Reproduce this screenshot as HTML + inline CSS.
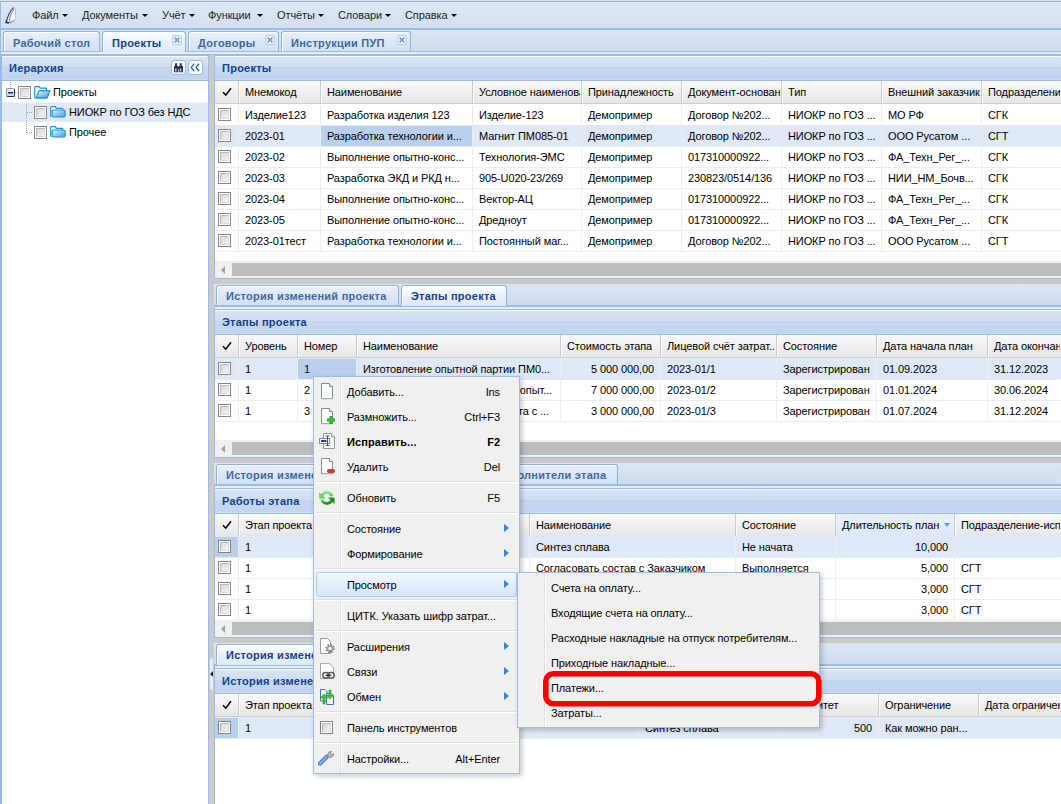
<!DOCTYPE html><html><head><meta charset="utf-8"><style>
*{box-sizing:border-box;margin:0;padding:0}
html,body{width:1061px;height:804px;overflow:hidden;background:#fff;font-family:'Liberation Sans',sans-serif;font-size:11px;color:#000}
.a{position:absolute;overflow:hidden}
.t{position:absolute;white-space:nowrap;line-height:13px;letter-spacing:-0.1px}
.bt{position:absolute;white-space:nowrap;line-height:13px;font-weight:bold;letter-spacing:0.25px}
.ck{position:absolute;width:13px;height:13px;border:1px solid #858585;background:#fff}
.ck:after{content:'';position:absolute;left:1px;top:1px;width:9px;height:9px;background:linear-gradient(135deg,#cfd3d9,#f3f3f3 85%);box-shadow:inset 1px 1px 0 #b9bdc4,inset -1px -1px 0 #dcdcdc}
</style></head><body>
<div class="a" style="left:0px;top:0px;width:1061px;height:1px;background:#e4e2d8"></div>
<div class="a" style="left:0px;top:1px;width:1061px;height:28px;border-top:1px solid #8fb2e2;border-bottom:1px solid #99bbe8;background:linear-gradient(#e6eef8 0,#dde7f3 1px,#d3dfef 26px)"></div>
<svg class="a" style="left:2px;top:4px" width="20" height="22" viewBox="0 0 20 22"><path d="M4.5 18 C5.5 13 8 8 11.5 3.6 L13.6 4.6 L13.4 15.2 C12 17.5 8 18.8 4.5 18.3Z" fill="#fbfbfd" stroke="#b8bcc8" stroke-width="0.8"/><path d="M4.4 18.2 C5.3 12.5 8 7.5 11.5 3.7" stroke="#3346a0" stroke-width="1.1" fill="none"/><path d="M7.4 17 C7.8 12 9.8 8 12.3 5.2" stroke="#4a5cb0" stroke-width="0.8" fill="none"/><path d="M4.2 18.4 C6.5 19 9 18.8 12.5 16" stroke="#6f7fc0" stroke-width="1" fill="none"/><path d="M4.3 16.5 L4.2 18.5 L7 18.8" stroke="#14247a" stroke-width="1.5" fill="none"/></svg>
<div class="t" style="left:32px;top:9px;color:#1e1e1e">Файл</div>
<div class="a" style="left:62px;top:14px;width:0;height:0;border-left:3px solid transparent;border-right:3px solid transparent;border-top:3px solid #000;overflow:visible"></div>
<div class="t" style="left:82px;top:9px;color:#1e1e1e">Документы</div>
<div class="a" style="left:142px;top:14px;width:0;height:0;border-left:3px solid transparent;border-right:3px solid transparent;border-top:3px solid #000;overflow:visible"></div>
<div class="t" style="left:162px;top:9px;color:#1e1e1e">Учёт</div>
<div class="a" style="left:189px;top:14px;width:0;height:0;border-left:3px solid transparent;border-right:3px solid transparent;border-top:3px solid #000;overflow:visible"></div>
<div class="t" style="left:208px;top:9px;color:#1e1e1e">Функции</div>
<div class="a" style="left:257px;top:14px;width:0;height:0;border-left:3px solid transparent;border-right:3px solid transparent;border-top:3px solid #000;overflow:visible"></div>
<div class="t" style="left:277px;top:9px;color:#1e1e1e">Отчёты</div>
<div class="a" style="left:318px;top:14px;width:0;height:0;border-left:3px solid transparent;border-right:3px solid transparent;border-top:3px solid #000;overflow:visible"></div>
<div class="t" style="left:338px;top:9px;color:#1e1e1e">Словари</div>
<div class="a" style="left:385px;top:14px;width:0;height:0;border-left:3px solid transparent;border-right:3px solid transparent;border-top:3px solid #000;overflow:visible"></div>
<div class="t" style="left:405px;top:9px;color:#1e1e1e">Справка</div>
<div class="a" style="left:451px;top:14px;width:0;height:0;border-left:3px solid transparent;border-right:3px solid transparent;border-top:3px solid #000;overflow:visible"></div>
<div class="a" style="left:0px;top:1px;width:1px;height:803px;background:#99bbe8"></div>
<div class="a" style="left:1px;top:29px;width:1060px;height:22px;border-top:1px solid #99bbe8;background:linear-gradient(#dbe6f4,#cfdcee)"></div>
<div class="a" style="left:1px;top:51px;width:1060px;height:1px;background:#99bbe8"></div>
<div class="a" style="left:1px;top:52px;width:1060px;height:2px;background:linear-gradient(#e8ecfb,#e2f2f6)"></div>
<div class="a" style="left:1px;top:54px;width:1060px;height:2px;background:#99bbe8"></div>
<div class="a" style="left:3px;top:31px;width:97px;height:20px;border:1px solid #8db2e3;border-bottom:none;border-radius:3px 3px 0 0;background:linear-gradient(#e9f0fa,#dae6f6 60%,#d3e1f3);box-shadow:inset 1px 1px 0 #fff"></div>
<div class="bt" style="left:13px;top:37px;color:#3f68a0">Рабочий стол</div>
<div class="a" style="left:102px;top:31px;width:84px;height:21px;border:1px solid #8db2e3;border-bottom:none;border-radius:3px 3px 0 0;background:linear-gradient(#fefeff,#e6eef9 60%,#dfe9f7);box-shadow:inset 1px 1px 0 #fff"></div>
<div class="bt" style="left:112px;top:37px;color:#15428b">Проекты</div>
<div class="a" style="left:172px;top:35px;width:10px;height:10px;border:1px solid #b9cce8;border-radius:2px;background:#eef3fa"><svg style="position:absolute;left:1px;top:1px" width="6" height="6" viewBox="0 0 6 6"><path d="M0.5 0.5L5.5 5.5M5.5 0.5L0.5 5.5" stroke="#7f9cc7" stroke-width="1.6"/></svg></div>
<div class="a" style="left:188px;top:31px;width:91px;height:20px;border:1px solid #8db2e3;border-bottom:none;border-radius:3px 3px 0 0;background:linear-gradient(#e9f0fa,#dae6f6 60%,#d3e1f3);box-shadow:inset 1px 1px 0 #fff"></div>
<div class="bt" style="left:198px;top:37px;color:#3f68a0">Договоры</div>
<div class="a" style="left:265px;top:35px;width:10px;height:10px;border:1px solid #b9cce8;border-radius:2px;background:#eef3fa"><svg style="position:absolute;left:1px;top:1px" width="6" height="6" viewBox="0 0 6 6"><path d="M0.5 0.5L5.5 5.5M5.5 0.5L0.5 5.5" stroke="#7f9cc7" stroke-width="1.6"/></svg></div>
<div class="a" style="left:281px;top:31px;width:130px;height:20px;border:1px solid #8db2e3;border-bottom:none;border-radius:3px 3px 0 0;background:linear-gradient(#e9f0fa,#dae6f6 60%,#d3e1f3);box-shadow:inset 1px 1px 0 #fff"></div>
<div class="bt" style="left:291px;top:37px;color:#3f68a0">Инструкции ПУП</div>
<div class="a" style="left:397px;top:35px;width:10px;height:10px;border:1px solid #b9cce8;border-radius:2px;background:#eef3fa"><svg style="position:absolute;left:1px;top:1px" width="6" height="6" viewBox="0 0 6 6"><path d="M0.5 0.5L5.5 5.5M5.5 0.5L0.5 5.5" stroke="#7f9cc7" stroke-width="1.6"/></svg></div>
<div class="a" style="left:1px;top:55px;width:208px;height:749px;border:1px solid #99bbe8;border-bottom:none;background:#fff"></div>
<div class="a" style="left:2px;top:56px;width:206px;height:25px;background:linear-gradient(#f5f8f9 0,#f5f8f9 1px,#dde6ef 1px,#dde6ef 2px,#d7e4f5 2px,#cfddf1 11px,#c3d3ea 11px,#c3d3ea 12px,#c6d8f1 12px,#c2d4ee 23px,#c8dcf4 23px,#c8dcf4 24px,#99bbe8 24px)"></div>
<div class="bt" style="left:9px;top:62px;color:#15428b">Иерархия</div>
<div class="a" style="left:171px;top:60px;width:15px;height:15px;border:1px solid #98bbea;border-radius:3px;background:linear-gradient(#ffffff,#f3f7fd)"><svg style="position:absolute;left:0;top:0" width="13" height="13" viewBox="0 0 13 13"><path d="M3 2.2h2.2v3H3z M7.6 2.2h2.2v3H7.6z" fill="#2e3a66"/><path d="M2 5h4.2v6.2H2z M6.8 5h4.2v6.2H6.8z" fill="#27325c"/><path d="M5.8 6h1.4v2H5.8z" fill="#27325c"/><path d="M3 7.6h1.6v2.8H3z M7.8 7.6h1.6v2.8H7.8z" fill="#a9c2f0"/></svg></div>
<div class="a" style="left:188px;top:60px;width:15px;height:15px;border:1px solid #98bbea;border-radius:3px;background:linear-gradient(#ffffff,#f3f7fd)"><svg style="position:absolute;left:0;top:0" width="13" height="13" viewBox="0 0 13 13"><path d="M5.2 2.6 L2.3 6.4 L5.2 10.2 M10 2.6 L7.1 6.4 L10 10.2" stroke="#2f5c9e" stroke-width="1.3" fill="none"/></svg></div>
<div class="a" style="left:2px;top:102px;width:206px;height:1px;background:repeating-linear-gradient(90deg,#dfe8f6 0 1px,#fff 1px 2px)"></div>
<div class="a" style="left:2px;top:103px;width:206px;height:19px;background:#e1e9f6"></div>
<div class="a" style="left:10px;top:82px;width:1px;height:5px;background:repeating-linear-gradient(#a0a0a0 0 1px,transparent 1px 2px)"></div>
<div class="a" style="left:26px;top:104px;width:1px;height:29px;background:repeating-linear-gradient(#a0a0a0 0 1px,transparent 1px 2px)"></div>
<div class="a" style="left:27px;top:112px;width:6px;height:1px;background:repeating-linear-gradient(90deg,#a0a0a0 0 1px,transparent 1px 2px)"></div>
<div class="a" style="left:27px;top:132px;width:6px;height:1px;background:repeating-linear-gradient(90deg,#a0a0a0 0 1px,transparent 1px 2px)"></div>
<div class="a" style="left:15px;top:92px;width:3px;height:1px;background:repeating-linear-gradient(90deg,#a0a0a0 0 1px,transparent 1px 2px)"></div>
<div class="a" style="left:6px;top:88px;width:9px;height:9px;border:1px solid #8796b6;border-right-color:#1f2f5a;border-bottom-color:#1f2f5a;border-radius:2px;background:linear-gradient(#fbfcff,#c9d6ea)"><div style="position:absolute;left:1px;top:3px;width:5px;height:1px;background:#1d2f66;box-shadow:0 0.5px 0 #1d2f66"></div></div>
<div class="ck" style="left:18px;top:86px"></div>
<svg class="a" style="left:34px;top:86px" width="17" height="13" viewBox="0 0 17 13"><defs><linearGradient id="fg3486" x1="0" y1="0" x2="1" y2="1"><stop offset="0" stop-color="#e3f3fd"/><stop offset="1" stop-color="#3a9ef2"/></linearGradient></defs><path d="M0.7 11.8 V1.3 Q0.7 0.7 1.3 0.7 H5 L6 2.2 H11.8 Q12.6 2.2 12.6 3 V4.6" fill="#fbfdff" stroke="#1a96d4" stroke-width="1.2"/><path d="M2.3 11.8 L5 4.6 H16 L13.2 11.8 Z" fill="url(#fg3486)" stroke="#1a96d4" stroke-width="1.2" stroke-linejoin="round"/><path d="M0.7 11.8 H13" stroke="#1a96d4" stroke-width="1.2"/></svg>
<div class="t" style="left:53px;top:86px;">Проекты</div>
<div class="ck" style="left:34px;top:106px"></div>
<svg class="a" style="left:50px;top:106px" width="16" height="13" viewBox="0 0 16 13"><defs><linearGradient id="fg50106" x1="0" y1="0" x2="1" y2="1"><stop offset="0" stop-color="#e3f3fd"/><stop offset="1" stop-color="#3a9ef2"/></linearGradient></defs><path d="M0.7 11 V1.3 Q0.7 0.7 1.3 0.7 H5.2 L6.4 2.4 H12 Q12.8 2.4 12.8 3.2 V4" fill="#fbfdff" stroke="#1a96d4" stroke-width="1.2"/><rect x="2.2" y="4" width="12.9" height="7" rx="1.2" fill="url(#fg50106)" stroke="#1a96d4" stroke-width="1.2"/></svg>
<div class="t" style="left:69px;top:106px;">НИОКР по ГОЗ без НДС</div>
<div class="ck" style="left:34px;top:126px"></div>
<svg class="a" style="left:50px;top:126px" width="16" height="13" viewBox="0 0 16 13"><defs><linearGradient id="fg50126" x1="0" y1="0" x2="1" y2="1"><stop offset="0" stop-color="#e3f3fd"/><stop offset="1" stop-color="#3a9ef2"/></linearGradient></defs><path d="M0.7 11 V1.3 Q0.7 0.7 1.3 0.7 H5.2 L6.4 2.4 H12 Q12.8 2.4 12.8 3.2 V4" fill="#fbfdff" stroke="#1a96d4" stroke-width="1.2"/><rect x="2.2" y="4" width="12.9" height="7" rx="1.2" fill="url(#fg50126)" stroke="#1a96d4" stroke-width="1.2"/></svg>
<div class="t" style="left:69px;top:126px;">Прочее</div>
<div class="a" style="left:209px;top:55px;width:5px;height:749px;background:#cacaca"></div>
<div class="a" style="left:214px;top:55px;width:847px;height:749px;background:#cacaca"></div>
<div class="a" style="left:214px;top:55px;width:847px;height:224px;border:1px solid #99bbe8;border-right:none;background:#fff"></div>
<div class="a" style="left:215px;top:56px;width:846px;height:25px;background:linear-gradient(#f5f8f9 0,#f5f8f9 1px,#dde6ef 1px,#dde6ef 2px,#d7e4f5 2px,#cfddf1 11px,#c3d3ea 11px,#c3d3ea 12px,#c6d8f1 12px,#c2d4ee 23px,#c8dcf4 23px,#c8dcf4 24px,#99bbe8 24px)"></div>
<div class="bt" style="left:222px;top:62px;color:#15428b">Проекты</div>
<div class="a" style="left:215px;top:81px;width:846px;height:23px;background:linear-gradient(#f9f9f9,#e6e6e6);border-bottom:1px solid #d0d0d0"></div>
<div class="a" style="left:238px;top:81px;width:1px;height:22px;background:#cbcbcb"></div>
<div class="a" style="left:239px;top:81px;width:1px;height:22px;background:#fafafa"></div>
<div class="a" style="left:320px;top:81px;width:1px;height:22px;background:#cbcbcb"></div>
<div class="a" style="left:321px;top:81px;width:1px;height:22px;background:#fafafa"></div>
<div class="a" style="left:472px;top:81px;width:1px;height:22px;background:#cbcbcb"></div>
<div class="a" style="left:473px;top:81px;width:1px;height:22px;background:#fafafa"></div>
<div class="a" style="left:581px;top:81px;width:1px;height:22px;background:#cbcbcb"></div>
<div class="a" style="left:582px;top:81px;width:1px;height:22px;background:#fafafa"></div>
<div class="a" style="left:681px;top:81px;width:1px;height:22px;background:#cbcbcb"></div>
<div class="a" style="left:682px;top:81px;width:1px;height:22px;background:#fafafa"></div>
<div class="a" style="left:781px;top:81px;width:1px;height:22px;background:#cbcbcb"></div>
<div class="a" style="left:782px;top:81px;width:1px;height:22px;background:#fafafa"></div>
<div class="a" style="left:881px;top:81px;width:1px;height:22px;background:#cbcbcb"></div>
<div class="a" style="left:882px;top:81px;width:1px;height:22px;background:#fafafa"></div>
<div class="a" style="left:981px;top:81px;width:1px;height:22px;background:#cbcbcb"></div>
<div class="a" style="left:982px;top:81px;width:1px;height:22px;background:#fafafa"></div>
<svg class="a" style="left:222px;top:87px" width="10" height="10" viewBox="0 0 10 10"><path d="M1 5.2 L3.8 8.2 L9 1.2" stroke="#000" stroke-width="1.5" fill="none"/></svg>
<div class="a" style="left:239px;top:81px;width:80px;height:22px"><div class="t" style="left:6px;top:5px">Мнемокод</div></div>
<div class="a" style="left:321px;top:81px;width:150px;height:22px"><div class="t" style="left:6px;top:5px">Наименование</div></div>
<div class="a" style="left:473px;top:81px;width:107px;height:22px"><div class="t" style="left:6px;top:5px">Условное наименование</div></div>
<div class="a" style="left:582px;top:81px;width:98px;height:22px"><div class="t" style="left:6px;top:5px">Принадлежность</div></div>
<div class="a" style="left:682px;top:81px;width:98px;height:22px"><div class="t" style="left:6px;top:5px">Документ-основание</div></div>
<div class="a" style="left:782px;top:81px;width:98px;height:22px"><div class="t" style="left:6px;top:5px">Тип</div></div>
<div class="a" style="left:882px;top:81px;width:98px;height:22px"><div class="t" style="left:6px;top:5px">Внешний заказчик</div></div>
<div class="a" style="left:982px;top:81px;width:78px;height:22px"><div class="t" style="left:6px;top:5px">Подразделение</div></div>
<div class="a" style="left:215px;top:125px;width:846px;height:1px;background:#ededed"></div>
<div class="a" style="left:238px;top:105px;width:1px;height:20px;background:#ededed"></div>
<div class="a" style="left:320px;top:105px;width:1px;height:20px;background:#ededed"></div>
<div class="a" style="left:472px;top:105px;width:1px;height:20px;background:#ededed"></div>
<div class="a" style="left:581px;top:105px;width:1px;height:20px;background:#ededed"></div>
<div class="a" style="left:681px;top:105px;width:1px;height:20px;background:#ededed"></div>
<div class="a" style="left:781px;top:105px;width:1px;height:20px;background:#ededed"></div>
<div class="a" style="left:881px;top:105px;width:1px;height:20px;background:#ededed"></div>
<div class="a" style="left:981px;top:105px;width:1px;height:20px;background:#ededed"></div>
<div class="ck" style="left:218px;top:108px"></div>
<div class="a" style="left:239px;top:105px;width:81px;height:20px"><div class="t" style="left:6px;top:4px">Изделие123</div></div>
<div class="a" style="left:321px;top:105px;width:151px;height:20px"><div class="t" style="left:6px;top:4px">Разработка изделия 123</div></div>
<div class="a" style="left:473px;top:105px;width:108px;height:20px"><div class="t" style="left:6px;top:4px">Изделие-123</div></div>
<div class="a" style="left:582px;top:105px;width:99px;height:20px"><div class="t" style="left:6px;top:4px">Демопример</div></div>
<div class="a" style="left:682px;top:105px;width:99px;height:20px"><div class="t" style="left:6px;top:4px">Договор №202...</div></div>
<div class="a" style="left:782px;top:105px;width:99px;height:20px"><div class="t" style="left:6px;top:4px">НИОКР по ГОЗ ...</div></div>
<div class="a" style="left:882px;top:105px;width:99px;height:20px"><div class="t" style="left:6px;top:4px">МО РФ</div></div>
<div class="a" style="left:982px;top:105px;width:79px;height:20px"><div class="t" style="left:6px;top:4px">СГК</div></div>
<div class="a" style="left:215px;top:125px;width:846px;height:21px;background:#dfe8f6"></div>
<div class="a" style="left:321px;top:126px;width:151px;height:20px;background:#b9cfee"></div>
<div class="a" style="left:215px;top:146px;width:846px;height:1px;background:repeating-linear-gradient(90deg,#d5e0f0 0 1px,#f4f7fb 1px 2px)"></div>
<div class="a" style="left:238px;top:126px;width:1px;height:20px;background:#ededed"></div>
<div class="a" style="left:320px;top:126px;width:1px;height:20px;background:#ededed"></div>
<div class="a" style="left:472px;top:126px;width:1px;height:20px;background:#ededed"></div>
<div class="a" style="left:581px;top:126px;width:1px;height:20px;background:#ededed"></div>
<div class="a" style="left:681px;top:126px;width:1px;height:20px;background:#ededed"></div>
<div class="a" style="left:781px;top:126px;width:1px;height:20px;background:#ededed"></div>
<div class="a" style="left:881px;top:126px;width:1px;height:20px;background:#ededed"></div>
<div class="a" style="left:981px;top:126px;width:1px;height:20px;background:#ededed"></div>
<div class="ck" style="left:218px;top:129px"></div>
<div class="a" style="left:239px;top:126px;width:81px;height:20px"><div class="t" style="left:6px;top:4px">2023-01</div></div>
<div class="a" style="left:321px;top:126px;width:151px;height:20px"><div class="t" style="left:6px;top:4px">Разработка технологии и...</div></div>
<div class="a" style="left:473px;top:126px;width:108px;height:20px"><div class="t" style="left:6px;top:4px">Магнит ПМ085-01</div></div>
<div class="a" style="left:582px;top:126px;width:99px;height:20px"><div class="t" style="left:6px;top:4px">Демопример</div></div>
<div class="a" style="left:682px;top:126px;width:99px;height:20px"><div class="t" style="left:6px;top:4px">Договор №202...</div></div>
<div class="a" style="left:782px;top:126px;width:99px;height:20px"><div class="t" style="left:6px;top:4px">НИОКР по ГОЗ ...</div></div>
<div class="a" style="left:882px;top:126px;width:99px;height:20px"><div class="t" style="left:6px;top:4px">ООО Русатом ...</div></div>
<div class="a" style="left:982px;top:126px;width:79px;height:20px"><div class="t" style="left:6px;top:4px">СГТ</div></div>
<div class="a" style="left:215px;top:167px;width:846px;height:1px;background:#ededed"></div>
<div class="a" style="left:238px;top:147px;width:1px;height:20px;background:#ededed"></div>
<div class="a" style="left:320px;top:147px;width:1px;height:20px;background:#ededed"></div>
<div class="a" style="left:472px;top:147px;width:1px;height:20px;background:#ededed"></div>
<div class="a" style="left:581px;top:147px;width:1px;height:20px;background:#ededed"></div>
<div class="a" style="left:681px;top:147px;width:1px;height:20px;background:#ededed"></div>
<div class="a" style="left:781px;top:147px;width:1px;height:20px;background:#ededed"></div>
<div class="a" style="left:881px;top:147px;width:1px;height:20px;background:#ededed"></div>
<div class="a" style="left:981px;top:147px;width:1px;height:20px;background:#ededed"></div>
<div class="ck" style="left:218px;top:150px"></div>
<div class="a" style="left:239px;top:147px;width:81px;height:20px"><div class="t" style="left:6px;top:4px">2023-02</div></div>
<div class="a" style="left:321px;top:147px;width:151px;height:20px"><div class="t" style="left:6px;top:4px">Выполнение опытно-конс...</div></div>
<div class="a" style="left:473px;top:147px;width:108px;height:20px"><div class="t" style="left:6px;top:4px">Технология-ЭМС</div></div>
<div class="a" style="left:582px;top:147px;width:99px;height:20px"><div class="t" style="left:6px;top:4px">Демопример</div></div>
<div class="a" style="left:682px;top:147px;width:99px;height:20px"><div class="t" style="left:6px;top:4px">017310000922...</div></div>
<div class="a" style="left:782px;top:147px;width:99px;height:20px"><div class="t" style="left:6px;top:4px">НИОКР по ГОЗ ...</div></div>
<div class="a" style="left:882px;top:147px;width:99px;height:20px"><div class="t" style="left:6px;top:4px">ФА_Техн_Рег_...</div></div>
<div class="a" style="left:982px;top:147px;width:79px;height:20px"><div class="t" style="left:6px;top:4px">СГК</div></div>
<div class="a" style="left:215px;top:188px;width:846px;height:1px;background:#ededed"></div>
<div class="a" style="left:238px;top:168px;width:1px;height:20px;background:#ededed"></div>
<div class="a" style="left:320px;top:168px;width:1px;height:20px;background:#ededed"></div>
<div class="a" style="left:472px;top:168px;width:1px;height:20px;background:#ededed"></div>
<div class="a" style="left:581px;top:168px;width:1px;height:20px;background:#ededed"></div>
<div class="a" style="left:681px;top:168px;width:1px;height:20px;background:#ededed"></div>
<div class="a" style="left:781px;top:168px;width:1px;height:20px;background:#ededed"></div>
<div class="a" style="left:881px;top:168px;width:1px;height:20px;background:#ededed"></div>
<div class="a" style="left:981px;top:168px;width:1px;height:20px;background:#ededed"></div>
<div class="ck" style="left:218px;top:171px"></div>
<div class="a" style="left:239px;top:168px;width:81px;height:20px"><div class="t" style="left:6px;top:4px">2023-03</div></div>
<div class="a" style="left:321px;top:168px;width:151px;height:20px"><div class="t" style="left:6px;top:4px">Разработка ЭКД и РКД н...</div></div>
<div class="a" style="left:473px;top:168px;width:108px;height:20px"><div class="t" style="left:6px;top:4px">905-U020-23/269</div></div>
<div class="a" style="left:582px;top:168px;width:99px;height:20px"><div class="t" style="left:6px;top:4px">Демопример</div></div>
<div class="a" style="left:682px;top:168px;width:99px;height:20px"><div class="t" style="left:6px;top:4px">230823/0514/136</div></div>
<div class="a" style="left:782px;top:168px;width:99px;height:20px"><div class="t" style="left:6px;top:4px">НИОКР по ГОЗ ...</div></div>
<div class="a" style="left:882px;top:168px;width:99px;height:20px"><div class="t" style="left:6px;top:4px">НИИ_НМ_Бочв...</div></div>
<div class="a" style="left:982px;top:168px;width:79px;height:20px"><div class="t" style="left:6px;top:4px">СГК</div></div>
<div class="a" style="left:215px;top:209px;width:846px;height:1px;background:#ededed"></div>
<div class="a" style="left:238px;top:189px;width:1px;height:20px;background:#ededed"></div>
<div class="a" style="left:320px;top:189px;width:1px;height:20px;background:#ededed"></div>
<div class="a" style="left:472px;top:189px;width:1px;height:20px;background:#ededed"></div>
<div class="a" style="left:581px;top:189px;width:1px;height:20px;background:#ededed"></div>
<div class="a" style="left:681px;top:189px;width:1px;height:20px;background:#ededed"></div>
<div class="a" style="left:781px;top:189px;width:1px;height:20px;background:#ededed"></div>
<div class="a" style="left:881px;top:189px;width:1px;height:20px;background:#ededed"></div>
<div class="a" style="left:981px;top:189px;width:1px;height:20px;background:#ededed"></div>
<div class="ck" style="left:218px;top:192px"></div>
<div class="a" style="left:239px;top:189px;width:81px;height:20px"><div class="t" style="left:6px;top:4px">2023-04</div></div>
<div class="a" style="left:321px;top:189px;width:151px;height:20px"><div class="t" style="left:6px;top:4px">Выполнение опытно-конс...</div></div>
<div class="a" style="left:473px;top:189px;width:108px;height:20px"><div class="t" style="left:6px;top:4px">Вектор-АЦ</div></div>
<div class="a" style="left:582px;top:189px;width:99px;height:20px"><div class="t" style="left:6px;top:4px">Демопример</div></div>
<div class="a" style="left:682px;top:189px;width:99px;height:20px"><div class="t" style="left:6px;top:4px">017310000922...</div></div>
<div class="a" style="left:782px;top:189px;width:99px;height:20px"><div class="t" style="left:6px;top:4px">НИОКР по ГОЗ ...</div></div>
<div class="a" style="left:882px;top:189px;width:99px;height:20px"><div class="t" style="left:6px;top:4px">ФА_Техн_Рег_...</div></div>
<div class="a" style="left:982px;top:189px;width:79px;height:20px"><div class="t" style="left:6px;top:4px">СГК</div></div>
<div class="a" style="left:215px;top:230px;width:846px;height:1px;background:#ededed"></div>
<div class="a" style="left:238px;top:210px;width:1px;height:20px;background:#ededed"></div>
<div class="a" style="left:320px;top:210px;width:1px;height:20px;background:#ededed"></div>
<div class="a" style="left:472px;top:210px;width:1px;height:20px;background:#ededed"></div>
<div class="a" style="left:581px;top:210px;width:1px;height:20px;background:#ededed"></div>
<div class="a" style="left:681px;top:210px;width:1px;height:20px;background:#ededed"></div>
<div class="a" style="left:781px;top:210px;width:1px;height:20px;background:#ededed"></div>
<div class="a" style="left:881px;top:210px;width:1px;height:20px;background:#ededed"></div>
<div class="a" style="left:981px;top:210px;width:1px;height:20px;background:#ededed"></div>
<div class="ck" style="left:218px;top:213px"></div>
<div class="a" style="left:239px;top:210px;width:81px;height:20px"><div class="t" style="left:6px;top:4px">2023-05</div></div>
<div class="a" style="left:321px;top:210px;width:151px;height:20px"><div class="t" style="left:6px;top:4px">Выполнение опытно-конс...</div></div>
<div class="a" style="left:473px;top:210px;width:108px;height:20px"><div class="t" style="left:6px;top:4px">Дредноут</div></div>
<div class="a" style="left:582px;top:210px;width:99px;height:20px"><div class="t" style="left:6px;top:4px">Демопример</div></div>
<div class="a" style="left:682px;top:210px;width:99px;height:20px"><div class="t" style="left:6px;top:4px">017310000922...</div></div>
<div class="a" style="left:782px;top:210px;width:99px;height:20px"><div class="t" style="left:6px;top:4px">НИОКР по ГОЗ ...</div></div>
<div class="a" style="left:882px;top:210px;width:99px;height:20px"><div class="t" style="left:6px;top:4px">ФА_Техн_Рег_...</div></div>
<div class="a" style="left:982px;top:210px;width:79px;height:20px"><div class="t" style="left:6px;top:4px">СГК</div></div>
<div class="a" style="left:215px;top:251px;width:846px;height:1px;background:#ededed"></div>
<div class="a" style="left:238px;top:231px;width:1px;height:20px;background:#ededed"></div>
<div class="a" style="left:320px;top:231px;width:1px;height:20px;background:#ededed"></div>
<div class="a" style="left:472px;top:231px;width:1px;height:20px;background:#ededed"></div>
<div class="a" style="left:581px;top:231px;width:1px;height:20px;background:#ededed"></div>
<div class="a" style="left:681px;top:231px;width:1px;height:20px;background:#ededed"></div>
<div class="a" style="left:781px;top:231px;width:1px;height:20px;background:#ededed"></div>
<div class="a" style="left:881px;top:231px;width:1px;height:20px;background:#ededed"></div>
<div class="a" style="left:981px;top:231px;width:1px;height:20px;background:#ededed"></div>
<div class="ck" style="left:218px;top:234px"></div>
<div class="a" style="left:239px;top:231px;width:81px;height:20px"><div class="t" style="left:6px;top:4px">2023-01тест</div></div>
<div class="a" style="left:321px;top:231px;width:151px;height:20px"><div class="t" style="left:6px;top:4px">Разработка технологии и...</div></div>
<div class="a" style="left:473px;top:231px;width:108px;height:20px"><div class="t" style="left:6px;top:4px">Постоянный маг...</div></div>
<div class="a" style="left:582px;top:231px;width:99px;height:20px"><div class="t" style="left:6px;top:4px">Демопример</div></div>
<div class="a" style="left:682px;top:231px;width:99px;height:20px"><div class="t" style="left:6px;top:4px">Договор №202...</div></div>
<div class="a" style="left:782px;top:231px;width:99px;height:20px"><div class="t" style="left:6px;top:4px">НИОКР по ГОЗ ...</div></div>
<div class="a" style="left:882px;top:231px;width:99px;height:20px"><div class="t" style="left:6px;top:4px">ООО Русатом ...</div></div>
<div class="a" style="left:982px;top:231px;width:79px;height:20px"><div class="t" style="left:6px;top:4px">СГТ</div></div>
<div class="a" style="left:215px;top:261px;width:846px;height:17px;background:#f0f0f0"></div>
<div class="a" style="left:221px;top:266px;width:0;height:0;border-top:4px solid transparent;border-bottom:4px solid transparent;border-right:4px solid #a0a0a0;overflow:visible"></div>
<div class="a" style="left:232px;top:263px;width:829px;height:13px;background:#bcbcbc"></div>
<div class="a" style="left:214px;top:284px;width:847px;height:174px;border-left:1px solid #99bbe8;border-bottom:1px solid #99bbe8;background:#fff"></div>
<div class="a" style="left:214px;top:284px;width:847px;height:22px;background:linear-gradient(#dbe6f4,#cfdcee)"></div>
<div class="a" style="left:214px;top:305px;width:847px;height:2px;background:#99bbe8"></div>
<div class="a" style="left:215px;top:307px;width:846px;height:2px;background:linear-gradient(#e8ecfb,#e2f2f6)"></div>
<div class="a" style="left:214px;top:309px;width:847px;height:1px;background:#99bbe8"></div>
<div class="a" style="left:216px;top:285px;width:183px;height:20px;border:1px solid #8db2e3;border-bottom:none;border-radius:3px 3px 0 0;background:linear-gradient(#e9f0fa,#dae6f6 60%,#d3e1f3);box-shadow:inset 1px 1px 0 #fff"></div>
<div class="bt" style="left:226px;top:290px;color:#3f68a0">История изменений проекта</div>
<div class="a" style="left:401px;top:285px;width:106px;height:21px;border:1px solid #8db2e3;border-bottom:none;border-radius:3px 3px 0 0;background:linear-gradient(#fefeff,#e6eef9 60%,#dfe9f7);box-shadow:inset 1px 1px 0 #fff"></div>
<div class="bt" style="left:411px;top:290px;color:#15428b">Этапы проекта</div>
<div class="a" style="left:215px;top:310px;width:846px;height:25px;background:linear-gradient(#f5f8f9 0,#f5f8f9 1px,#dde6ef 1px,#dde6ef 2px,#d7e4f5 2px,#cfddf1 11px,#c3d3ea 11px,#c3d3ea 12px,#c6d8f1 12px,#c2d4ee 23px,#c8dcf4 23px,#c8dcf4 24px,#99bbe8 24px)"></div>
<div class="bt" style="left:222px;top:316px;color:#15428b">Этапы проекта</div>
<div class="a" style="left:215px;top:335px;width:846px;height:23px;background:linear-gradient(#f9f9f9,#e6e6e6);border-bottom:1px solid #d0d0d0"></div>
<div class="a" style="left:238px;top:335px;width:1px;height:22px;background:#cbcbcb"></div>
<div class="a" style="left:239px;top:335px;width:1px;height:22px;background:#fafafa"></div>
<div class="a" style="left:297px;top:335px;width:1px;height:22px;background:#cbcbcb"></div>
<div class="a" style="left:298px;top:335px;width:1px;height:22px;background:#fafafa"></div>
<div class="a" style="left:356px;top:335px;width:1px;height:22px;background:#cbcbcb"></div>
<div class="a" style="left:357px;top:335px;width:1px;height:22px;background:#fafafa"></div>
<div class="a" style="left:560px;top:335px;width:1px;height:22px;background:#cbcbcb"></div>
<div class="a" style="left:561px;top:335px;width:1px;height:22px;background:#fafafa"></div>
<div class="a" style="left:660px;top:335px;width:1px;height:22px;background:#cbcbcb"></div>
<div class="a" style="left:661px;top:335px;width:1px;height:22px;background:#fafafa"></div>
<div class="a" style="left:776px;top:335px;width:1px;height:22px;background:#cbcbcb"></div>
<div class="a" style="left:777px;top:335px;width:1px;height:22px;background:#fafafa"></div>
<div class="a" style="left:876px;top:335px;width:1px;height:22px;background:#cbcbcb"></div>
<div class="a" style="left:877px;top:335px;width:1px;height:22px;background:#fafafa"></div>
<div class="a" style="left:987px;top:335px;width:1px;height:22px;background:#cbcbcb"></div>
<div class="a" style="left:988px;top:335px;width:1px;height:22px;background:#fafafa"></div>
<svg class="a" style="left:222px;top:341px" width="10" height="10" viewBox="0 0 10 10"><path d="M1 5.2 L3.8 8.2 L9 1.2" stroke="#000" stroke-width="1.5" fill="none"/></svg>
<div class="a" style="left:239px;top:335px;width:57px;height:22px"><div class="t" style="left:6px;top:5px">Уровень</div></div>
<div class="a" style="left:298px;top:335px;width:57px;height:22px"><div class="t" style="left:6px;top:5px">Номер</div></div>
<div class="a" style="left:357px;top:335px;width:202px;height:22px"><div class="t" style="left:6px;top:5px">Наименование</div></div>
<div class="a" style="left:561px;top:335px;width:98px;height:22px"><div class="t" style="left:6px;top:5px">Стоимость этапа</div></div>
<div class="a" style="left:661px;top:335px;width:114px;height:22px"><div class="t" style="left:6px;top:5px">Лицевой счёт затрат...</div></div>
<div class="a" style="left:777px;top:335px;width:98px;height:22px"><div class="t" style="left:6px;top:5px">Состояние</div></div>
<div class="a" style="left:877px;top:335px;width:109px;height:22px"><div class="t" style="left:6px;top:5px">Дата начала план</div></div>
<div class="a" style="left:988px;top:335px;width:72px;height:22px"><div class="t" style="left:6px;top:5px">Дата окончания план</div></div>
<div class="a" style="left:215px;top:358px;width:846px;height:21px;background:#dfe8f6"></div>
<div class="a" style="left:298px;top:359px;width:58px;height:20px;background:#b9cfee"></div>
<div class="a" style="left:215px;top:379px;width:846px;height:1px;background:repeating-linear-gradient(90deg,#d5e0f0 0 1px,#f4f7fb 1px 2px)"></div>
<div class="a" style="left:238px;top:359px;width:1px;height:20px;background:#ededed"></div>
<div class="a" style="left:297px;top:359px;width:1px;height:20px;background:#ededed"></div>
<div class="a" style="left:356px;top:359px;width:1px;height:20px;background:#ededed"></div>
<div class="a" style="left:560px;top:359px;width:1px;height:20px;background:#ededed"></div>
<div class="a" style="left:660px;top:359px;width:1px;height:20px;background:#ededed"></div>
<div class="a" style="left:776px;top:359px;width:1px;height:20px;background:#ededed"></div>
<div class="a" style="left:876px;top:359px;width:1px;height:20px;background:#ededed"></div>
<div class="a" style="left:987px;top:359px;width:1px;height:20px;background:#ededed"></div>
<div class="ck" style="left:218px;top:362px"></div>
<div class="a" style="left:239px;top:359px;width:58px;height:20px"><div class="t" style="left:6px;top:4px">1</div></div>
<div class="a" style="left:298px;top:359px;width:58px;height:20px"><div class="t" style="left:6px;top:4px">1</div></div>
<div class="a" style="left:357px;top:359px;width:203px;height:20px"><div class="t" style="left:6px;top:4px">Изготовление опытной партии ПМ0...</div></div>
<div class="a" style="left:561px;top:359px;width:99px;height:20px"><div class="t" style="right:6px;top:4px">5 000 000,00</div></div>
<div class="a" style="left:661px;top:359px;width:115px;height:20px"><div class="t" style="left:6px;top:4px">2023-01/1</div></div>
<div class="a" style="left:777px;top:359px;width:99px;height:20px"><div class="t" style="left:6px;top:4px">Зарегистрирован</div></div>
<div class="a" style="left:877px;top:359px;width:110px;height:20px"><div class="t" style="left:6px;top:4px">01.09.2023</div></div>
<div class="a" style="left:988px;top:359px;width:73px;height:20px"><div class="t" style="left:6px;top:4px">31.12.2023</div></div>
<div class="a" style="left:215px;top:400px;width:846px;height:1px;background:#ededed"></div>
<div class="a" style="left:238px;top:380px;width:1px;height:20px;background:#ededed"></div>
<div class="a" style="left:297px;top:380px;width:1px;height:20px;background:#ededed"></div>
<div class="a" style="left:356px;top:380px;width:1px;height:20px;background:#ededed"></div>
<div class="a" style="left:560px;top:380px;width:1px;height:20px;background:#ededed"></div>
<div class="a" style="left:660px;top:380px;width:1px;height:20px;background:#ededed"></div>
<div class="a" style="left:776px;top:380px;width:1px;height:20px;background:#ededed"></div>
<div class="a" style="left:876px;top:380px;width:1px;height:20px;background:#ededed"></div>
<div class="a" style="left:987px;top:380px;width:1px;height:20px;background:#ededed"></div>
<div class="ck" style="left:218px;top:383px"></div>
<div class="a" style="left:239px;top:380px;width:58px;height:20px"><div class="t" style="left:6px;top:4px">1</div></div>
<div class="a" style="left:298px;top:380px;width:58px;height:20px"><div class="t" style="left:6px;top:4px">2</div></div>
<div class="a" style="left:357px;top:380px;width:203px;height:20px"><div class="t" style="left:6px;top:4px">Проведение предварительных опыт...</div></div>
<div class="a" style="left:561px;top:380px;width:99px;height:20px"><div class="t" style="right:6px;top:4px">7 000 000,00</div></div>
<div class="a" style="left:661px;top:380px;width:115px;height:20px"><div class="t" style="left:6px;top:4px">2023-01/2</div></div>
<div class="a" style="left:777px;top:380px;width:99px;height:20px"><div class="t" style="left:6px;top:4px">Зарегистрирован</div></div>
<div class="a" style="left:877px;top:380px;width:110px;height:20px"><div class="t" style="left:6px;top:4px">01.01.2024</div></div>
<div class="a" style="left:988px;top:380px;width:73px;height:20px"><div class="t" style="left:6px;top:4px">30.06.2024</div></div>
<div class="a" style="left:215px;top:421px;width:846px;height:1px;background:#ededed"></div>
<div class="a" style="left:238px;top:401px;width:1px;height:20px;background:#ededed"></div>
<div class="a" style="left:297px;top:401px;width:1px;height:20px;background:#ededed"></div>
<div class="a" style="left:356px;top:401px;width:1px;height:20px;background:#ededed"></div>
<div class="a" style="left:560px;top:401px;width:1px;height:20px;background:#ededed"></div>
<div class="a" style="left:660px;top:401px;width:1px;height:20px;background:#ededed"></div>
<div class="a" style="left:776px;top:401px;width:1px;height:20px;background:#ededed"></div>
<div class="a" style="left:876px;top:401px;width:1px;height:20px;background:#ededed"></div>
<div class="a" style="left:987px;top:401px;width:1px;height:20px;background:#ededed"></div>
<div class="ck" style="left:218px;top:404px"></div>
<div class="a" style="left:239px;top:401px;width:58px;height:20px"><div class="t" style="left:6px;top:4px">1</div></div>
<div class="a" style="left:298px;top:401px;width:58px;height:20px"><div class="t" style="left:6px;top:4px">3</div></div>
<div class="a" style="left:357px;top:401px;width:203px;height:20px"><div class="t" style="left:6px;top:4px">Разработка отчёта по результата с ...</div></div>
<div class="a" style="left:561px;top:401px;width:99px;height:20px"><div class="t" style="right:6px;top:4px">3 000 000,00</div></div>
<div class="a" style="left:661px;top:401px;width:115px;height:20px"><div class="t" style="left:6px;top:4px">2023-01/3</div></div>
<div class="a" style="left:777px;top:401px;width:99px;height:20px"><div class="t" style="left:6px;top:4px">Зарегистрирован</div></div>
<div class="a" style="left:877px;top:401px;width:110px;height:20px"><div class="t" style="left:6px;top:4px">01.07.2024</div></div>
<div class="a" style="left:988px;top:401px;width:73px;height:20px"><div class="t" style="left:6px;top:4px">31.12.2024</div></div>
<div class="a" style="left:215px;top:440px;width:846px;height:17px;background:#f0f0f0"></div>
<div class="a" style="left:221px;top:445px;width:0;height:0;border-top:4px solid transparent;border-bottom:4px solid transparent;border-right:4px solid #a0a0a0;overflow:visible"></div>
<div class="a" style="left:232px;top:442px;width:829px;height:13px;background:#bcbcbc"></div>
<div class="a" style="left:214px;top:463px;width:847px;height:175px;border-left:1px solid #99bbe8;border-bottom:1px solid #99bbe8;background:#fff"></div>
<div class="a" style="left:214px;top:463px;width:847px;height:22px;background:linear-gradient(#dbe6f4,#cfdcee)"></div>
<div class="a" style="left:214px;top:484px;width:847px;height:2px;background:#99bbe8"></div>
<div class="a" style="left:215px;top:486px;width:846px;height:2px;background:linear-gradient(#e8ecfb,#e2f2f6)"></div>
<div class="a" style="left:214px;top:488px;width:847px;height:1px;background:#99bbe8"></div>
<div class="a" style="left:216px;top:464px;width:158px;height:20px;border:1px solid #8db2e3;border-bottom:none;border-radius:3px 3px 0 0;background:linear-gradient(#e9f0fa,#dae6f6 60%,#d3e1f3);box-shadow:inset 1px 1px 0 #fff"></div>
<div class="bt" style="left:226px;top:469px;color:#3f68a0">История изменений этапа</div>
<div class="a" style="left:486px;top:464px;width:132px;height:20px;border:1px solid #8db2e3;border-bottom:none;border-radius:3px 3px 0 0;background:linear-gradient(#e9f0fa,#dae6f6 60%,#d3e1f3);box-shadow:inset 1px 1px 0 #fff"></div>
<div class="bt" style="left:496px;top:469px;color:#3f68a0">Исполнители этапа</div>
<div class="a" style="left:215px;top:489px;width:846px;height:25px;background:linear-gradient(#f5f8f9 0,#f5f8f9 1px,#dde6ef 1px,#dde6ef 2px,#d7e4f5 2px,#cfddf1 11px,#c3d3ea 11px,#c3d3ea 12px,#c6d8f1 12px,#c2d4ee 23px,#c8dcf4 23px,#c8dcf4 24px,#99bbe8 24px)"></div>
<div class="bt" style="left:222px;top:495px;color:#15428b">Работы этапа</div>
<div class="a" style="left:215px;top:514px;width:846px;height:23px;background:linear-gradient(#f9f9f9,#e6e6e6);border-bottom:1px solid #d0d0d0"></div>
<div class="a" style="left:238px;top:514px;width:1px;height:22px;background:#cbcbcb"></div>
<div class="a" style="left:239px;top:514px;width:1px;height:22px;background:#fafafa"></div>
<div class="a" style="left:380px;top:514px;width:1px;height:22px;background:#cbcbcb"></div>
<div class="a" style="left:381px;top:514px;width:1px;height:22px;background:#fafafa"></div>
<div class="a" style="left:460px;top:514px;width:1px;height:22px;background:#cbcbcb"></div>
<div class="a" style="left:461px;top:514px;width:1px;height:22px;background:#fafafa"></div>
<div class="a" style="left:529px;top:514px;width:1px;height:22px;background:#cbcbcb"></div>
<div class="a" style="left:530px;top:514px;width:1px;height:22px;background:#fafafa"></div>
<div class="a" style="left:735px;top:514px;width:1px;height:22px;background:#cbcbcb"></div>
<div class="a" style="left:736px;top:514px;width:1px;height:22px;background:#fafafa"></div>
<div class="a" style="left:835px;top:514px;width:1px;height:22px;background:#cbcbcb"></div>
<div class="a" style="left:836px;top:514px;width:1px;height:22px;background:#fafafa"></div>
<div class="a" style="left:954px;top:514px;width:1px;height:22px;background:#cbcbcb"></div>
<div class="a" style="left:955px;top:514px;width:1px;height:22px;background:#fafafa"></div>
<svg class="a" style="left:222px;top:520px" width="10" height="10" viewBox="0 0 10 10"><path d="M1 5.2 L3.8 8.2 L9 1.2" stroke="#000" stroke-width="1.5" fill="none"/></svg>
<div class="a" style="left:239px;top:514px;width:140px;height:22px"><div class="t" style="left:6px;top:5px">Этап проекта</div></div>
<div class="a" style="left:530px;top:514px;width:204px;height:22px"><div class="t" style="left:6px;top:5px">Наименование</div></div>
<div class="a" style="left:736px;top:514px;width:98px;height:22px"><div class="t" style="left:6px;top:5px">Состояние</div></div>
<div class="a" style="left:836px;top:514px;width:118px;height:22px;background:linear-gradient(#ebf3fd,#d9e8fb)"></div>
<div class="a" style="left:944px;top:523px;width:0;height:0;border-left:3.5px solid transparent;border-right:3.5px solid transparent;border-top:4px solid #6e9ad4;overflow:visible"></div>
<div class="a" style="left:836px;top:514px;width:117px;height:22px"><div class="t" style="left:6px;top:5px">Длительность план</div></div>
<div class="a" style="left:955px;top:514px;width:105px;height:22px"><div class="t" style="left:6px;top:5px">Подразделение-исполнитель</div></div>
<div class="a" style="left:215px;top:536px;width:846px;height:21px;background:#dfe8f6"></div>
<div class="a" style="left:215px;top:537px;width:23px;height:20px;background:#b9cfee"></div>
<div class="a" style="left:215px;top:557px;width:846px;height:1px;background:repeating-linear-gradient(90deg,#d5e0f0 0 1px,#f4f7fb 1px 2px)"></div>
<div class="a" style="left:238px;top:537px;width:1px;height:20px;background:#ededed"></div>
<div class="a" style="left:380px;top:537px;width:1px;height:20px;background:#ededed"></div>
<div class="a" style="left:460px;top:537px;width:1px;height:20px;background:#ededed"></div>
<div class="a" style="left:529px;top:537px;width:1px;height:20px;background:#ededed"></div>
<div class="a" style="left:735px;top:537px;width:1px;height:20px;background:#ededed"></div>
<div class="a" style="left:835px;top:537px;width:1px;height:20px;background:#ededed"></div>
<div class="a" style="left:954px;top:537px;width:1px;height:20px;background:#ededed"></div>
<div class="ck" style="left:218px;top:540px"></div>
<div class="a" style="left:239px;top:537px;width:141px;height:20px"><div class="t" style="left:6px;top:4px">1</div></div>
<div class="a" style="left:530px;top:537px;width:205px;height:20px"><div class="t" style="left:6px;top:4px">Синтез сплава</div></div>
<div class="a" style="left:736px;top:537px;width:99px;height:20px"><div class="t" style="left:6px;top:4px">Не начата</div></div>
<div class="a" style="left:836px;top:537px;width:118px;height:20px"><div class="t" style="right:6px;top:4px">10,000</div></div>
<div class="a" style="left:215px;top:578px;width:846px;height:1px;background:#ededed"></div>
<div class="a" style="left:238px;top:558px;width:1px;height:20px;background:#ededed"></div>
<div class="a" style="left:380px;top:558px;width:1px;height:20px;background:#ededed"></div>
<div class="a" style="left:460px;top:558px;width:1px;height:20px;background:#ededed"></div>
<div class="a" style="left:529px;top:558px;width:1px;height:20px;background:#ededed"></div>
<div class="a" style="left:735px;top:558px;width:1px;height:20px;background:#ededed"></div>
<div class="a" style="left:835px;top:558px;width:1px;height:20px;background:#ededed"></div>
<div class="a" style="left:954px;top:558px;width:1px;height:20px;background:#ededed"></div>
<div class="ck" style="left:218px;top:561px"></div>
<div class="a" style="left:239px;top:558px;width:141px;height:20px"><div class="t" style="left:6px;top:4px">1</div></div>
<div class="a" style="left:530px;top:558px;width:205px;height:20px"><div class="t" style="left:6px;top:4px">Согласовать состав с Заказчиком</div></div>
<div class="a" style="left:736px;top:558px;width:99px;height:20px"><div class="t" style="left:6px;top:4px">Выполняется</div></div>
<div class="a" style="left:836px;top:558px;width:118px;height:20px"><div class="t" style="right:6px;top:4px">5,000</div></div>
<div class="a" style="left:955px;top:558px;width:106px;height:20px"><div class="t" style="left:6px;top:4px">СГТ</div></div>
<div class="a" style="left:215px;top:599px;width:846px;height:1px;background:#ededed"></div>
<div class="a" style="left:238px;top:579px;width:1px;height:20px;background:#ededed"></div>
<div class="a" style="left:380px;top:579px;width:1px;height:20px;background:#ededed"></div>
<div class="a" style="left:460px;top:579px;width:1px;height:20px;background:#ededed"></div>
<div class="a" style="left:529px;top:579px;width:1px;height:20px;background:#ededed"></div>
<div class="a" style="left:735px;top:579px;width:1px;height:20px;background:#ededed"></div>
<div class="a" style="left:835px;top:579px;width:1px;height:20px;background:#ededed"></div>
<div class="a" style="left:954px;top:579px;width:1px;height:20px;background:#ededed"></div>
<div class="ck" style="left:218px;top:582px"></div>
<div class="a" style="left:239px;top:579px;width:141px;height:20px"><div class="t" style="left:6px;top:4px">1</div></div>
<div class="a" style="left:836px;top:579px;width:118px;height:20px"><div class="t" style="right:6px;top:4px">3,000</div></div>
<div class="a" style="left:955px;top:579px;width:106px;height:20px"><div class="t" style="left:6px;top:4px">СГТ</div></div>
<div class="a" style="left:215px;top:620px;width:846px;height:1px;background:#ededed"></div>
<div class="a" style="left:238px;top:600px;width:1px;height:20px;background:#ededed"></div>
<div class="a" style="left:380px;top:600px;width:1px;height:20px;background:#ededed"></div>
<div class="a" style="left:460px;top:600px;width:1px;height:20px;background:#ededed"></div>
<div class="a" style="left:529px;top:600px;width:1px;height:20px;background:#ededed"></div>
<div class="a" style="left:735px;top:600px;width:1px;height:20px;background:#ededed"></div>
<div class="a" style="left:835px;top:600px;width:1px;height:20px;background:#ededed"></div>
<div class="a" style="left:954px;top:600px;width:1px;height:20px;background:#ededed"></div>
<div class="ck" style="left:218px;top:603px"></div>
<div class="a" style="left:239px;top:600px;width:141px;height:20px"><div class="t" style="left:6px;top:4px">1</div></div>
<div class="a" style="left:836px;top:600px;width:118px;height:20px"><div class="t" style="right:6px;top:4px">3,000</div></div>
<div class="a" style="left:955px;top:600px;width:106px;height:20px"><div class="t" style="left:6px;top:4px">СГТ</div></div>
<div class="a" style="left:215px;top:620px;width:846px;height:17px;background:#f0f0f0"></div>
<div class="a" style="left:221px;top:625px;width:0;height:0;border-top:4px solid transparent;border-bottom:4px solid transparent;border-right:4px solid #a0a0a0;overflow:visible"></div>
<div class="a" style="left:232px;top:622px;width:829px;height:13px;background:#bcbcbc"></div>
<div class="a" style="left:214px;top:643px;width:847px;height:161px;border-left:1px solid #99bbe8;background:#fff"></div>
<div class="a" style="left:214px;top:643px;width:847px;height:22px;background:linear-gradient(#dbe6f4,#cfdcee)"></div>
<div class="a" style="left:214px;top:664px;width:847px;height:2px;background:#99bbe8"></div>
<div class="a" style="left:215px;top:666px;width:846px;height:2px;background:linear-gradient(#e8ecfb,#e2f2f6)"></div>
<div class="a" style="left:214px;top:668px;width:847px;height:1px;background:#99bbe8"></div>
<div class="a" style="left:216px;top:644px;width:230px;height:21px;border:1px solid #8db2e3;border-bottom:none;border-radius:3px 3px 0 0;background:linear-gradient(#fefeff,#e6eef9 60%,#dfe9f7);box-shadow:inset 1px 1px 0 #fff"></div>
<div class="bt" style="left:226px;top:649px;color:#15428b">История изменений работ</div>
<div class="a" style="left:215px;top:669px;width:846px;height:25px;background:linear-gradient(#f5f8f9 0,#f5f8f9 1px,#dde6ef 1px,#dde6ef 2px,#d7e4f5 2px,#cfddf1 11px,#c3d3ea 11px,#c3d3ea 12px,#c6d8f1 12px,#c2d4ee 23px,#c8dcf4 23px,#c8dcf4 24px,#99bbe8 24px)"></div>
<div class="bt" style="left:222px;top:675px;color:#15428b">История изменений</div>
<div class="a" style="left:215px;top:694px;width:846px;height:23px;background:linear-gradient(#f9f9f9,#e6e6e6);border-bottom:1px solid #d0d0d0"></div>
<div class="a" style="left:238px;top:694px;width:1px;height:22px;background:#cbcbcb"></div>
<div class="a" style="left:239px;top:694px;width:1px;height:22px;background:#fafafa"></div>
<div class="a" style="left:380px;top:694px;width:1px;height:22px;background:#cbcbcb"></div>
<div class="a" style="left:381px;top:694px;width:1px;height:22px;background:#fafafa"></div>
<div class="a" style="left:538px;top:694px;width:1px;height:22px;background:#cbcbcb"></div>
<div class="a" style="left:539px;top:694px;width:1px;height:22px;background:#fafafa"></div>
<div class="a" style="left:638px;top:694px;width:1px;height:22px;background:#cbcbcb"></div>
<div class="a" style="left:639px;top:694px;width:1px;height:22px;background:#fafafa"></div>
<div class="a" style="left:778px;top:694px;width:1px;height:22px;background:#cbcbcb"></div>
<div class="a" style="left:779px;top:694px;width:1px;height:22px;background:#fafafa"></div>
<div class="a" style="left:878px;top:694px;width:1px;height:22px;background:#cbcbcb"></div>
<div class="a" style="left:879px;top:694px;width:1px;height:22px;background:#fafafa"></div>
<div class="a" style="left:978px;top:694px;width:1px;height:22px;background:#cbcbcb"></div>
<div class="a" style="left:979px;top:694px;width:1px;height:22px;background:#fafafa"></div>
<svg class="a" style="left:222px;top:700px" width="10" height="10" viewBox="0 0 10 10"><path d="M1 5.2 L3.8 8.2 L9 1.2" stroke="#000" stroke-width="1.5" fill="none"/></svg>
<div class="a" style="left:239px;top:694px;width:140px;height:22px"><div class="t" style="left:6px;top:5px">Этап проекта</div></div>
<div class="a" style="left:639px;top:694px;width:138px;height:22px"><div class="t" style="left:6px;top:5px">Работа</div></div>
<div class="a" style="left:779px;top:694px;width:98px;height:22px"><div class="t" style="left:6px;top:5px">Приоритет</div></div>
<div class="a" style="left:879px;top:694px;width:98px;height:22px"><div class="t" style="left:6px;top:5px">Ограничение</div></div>
<div class="a" style="left:979px;top:694px;width:81px;height:22px"><div class="t" style="left:6px;top:5px">Дата ограничения</div></div>
<div class="a" style="left:215px;top:717px;width:846px;height:21px;background:#dfe8f6"></div>
<div class="a" style="left:215px;top:718px;width:23px;height:20px;background:#b9cfee"></div>
<div class="a" style="left:215px;top:738px;width:846px;height:1px;background:repeating-linear-gradient(90deg,#d5e0f0 0 1px,#f4f7fb 1px 2px)"></div>
<div class="a" style="left:238px;top:718px;width:1px;height:20px;background:#ededed"></div>
<div class="a" style="left:380px;top:718px;width:1px;height:20px;background:#ededed"></div>
<div class="a" style="left:538px;top:718px;width:1px;height:20px;background:#ededed"></div>
<div class="a" style="left:638px;top:718px;width:1px;height:20px;background:#ededed"></div>
<div class="a" style="left:778px;top:718px;width:1px;height:20px;background:#ededed"></div>
<div class="a" style="left:878px;top:718px;width:1px;height:20px;background:#ededed"></div>
<div class="a" style="left:978px;top:718px;width:1px;height:20px;background:#ededed"></div>
<div class="ck" style="left:218px;top:721px"></div>
<div class="a" style="left:239px;top:718px;width:141px;height:20px"><div class="t" style="left:6px;top:4px">1</div></div>
<div class="a" style="left:639px;top:718px;width:139px;height:20px"><div class="t" style="left:6px;top:4px">Синтез сплава</div></div>
<div class="a" style="left:779px;top:718px;width:99px;height:20px"><div class="t" style="right:6px;top:4px">500</div></div>
<div class="a" style="left:879px;top:718px;width:99px;height:20px"><div class="t" style="left:6px;top:4px">Как можно ран...</div></div>
<svg class="a" style="left:209px;top:657px" width="5" height="34" viewBox="0 0 5 34"><path d="M1 3 L4 0 L4 34 L1 31Z" fill="#ececec"/><path d="M4 14 L1 17 L4 20Z" fill="#222"/></svg>
<div class="a" style="left:313px;top:376px;width:207px;height:398px;border:1px solid #9ebde6;background:#f0f0f0;box-shadow:2px 2px 5px rgba(0,0,0,0.22)"></div>
<div class="a" style="left:340px;top:377px;width:1px;height:396px;background:#e0e0e0"></div>
<div class="a" style="left:341px;top:377px;width:1px;height:396px;background:#fff"></div>
<svg class="a" style="left:321px;top:383px" width="14" height="17" viewBox="0 0 14 17"><path d="M0.5 0.5 L8.5 0.5 L11.5 3.5 L11.5 15.5 L0.5 15.5Z" fill="#fbfcfc" stroke="#7f8f8d"/><path d="M8.5 0.5 L8.5 3.5 L11.5 3.5" fill="#fff" stroke="#7f8f8d"/><path d="M1 15.8 L12 15.8" stroke="#b8bcbc" stroke-width="1"/></svg>
<div class="t" style="left:347px;top:386px;">Добавить...</div>
<div class="t" style="left:400px;top:386px;width:100px;text-align:right;">Ins</div>
<svg class="a" style="left:321px;top:408px" width="14" height="17" viewBox="0 0 14 17"><path d="M0.5 0.5 L8.5 0.5 L11.5 3.5 L11.5 15.5 L0.5 15.5Z" fill="#fbfcfc" stroke="#7f8f8d"/><path d="M8.5 0.5 L8.5 3.5 L11.5 3.5" fill="#fff" stroke="#7f8f8d"/><path d="M1 15.8 L12 15.8" stroke="#b8bcbc" stroke-width="1"/></svg>
<svg class="a" style="left:327px;top:416px" width="8" height="8" viewBox="0 0 8 8"><path d="M2.8 0.5h2.4v2.3h2.3v2.4H5.2v2.3H2.8V5.2H0.5V2.8h2.3z" fill="#3cc43c" stroke="#178a17" stroke-width="0.7"/></svg>
<div class="t" style="left:347px;top:411px;">Размножить...</div>
<div class="t" style="left:400px;top:411px;width:100px;text-align:right;">Ctrl+F3</div>
<svg class="a" style="left:318px;top:433px" width="18" height="17" viewBox="0 0 18 17"><path d="M5.5 0.5 L13.5 0.5 L16.5 3.5 L16.5 15.5 L5.5 15.5Z" fill="#fbfdfd" stroke="#869896"/><path d="M13.5 0.5 L13.5 3.5 L16.5 3.5" fill="#fff" stroke="#869896"/><rect x="1.5" y="5.5" width="10" height="5" fill="#fbfbf6" stroke="#8a8a8a"/><rect x="3" y="7" width="5.5" height="2" fill="#1a3fd0"/><path d="M7.6 3 H11.4 M9.5 3 V12.5 M7.6 12.5 H11.4" stroke="#444" stroke-width="0.9" fill="none"/></svg>
<div class="t" style="left:347px;top:436px;font-weight:bold;letter-spacing:0.1px">Исправить...</div>
<div class="t" style="left:400px;top:436px;width:100px;text-align:right;font-weight:bold">F2</div>
<svg class="a" style="left:321px;top:458px" width="14" height="17" viewBox="0 0 14 17"><path d="M0.5 0.5 L8.5 0.5 L11.5 3.5 L11.5 15.5 L0.5 15.5Z" fill="#fbfcfc" stroke="#7f8f8d"/><path d="M8.5 0.5 L8.5 3.5 L11.5 3.5" fill="#fff" stroke="#7f8f8d"/><path d="M1 15.8 L12 15.8" stroke="#b8bcbc" stroke-width="1"/></svg>
<svg class="a" style="left:327px;top:469px" width="8" height="4" viewBox="0 0 8 4"><rect x="0.5" y="0.5" width="7" height="3" rx="1" fill="#e03030" stroke="#a01010" stroke-width="0.6"/></svg>
<div class="t" style="left:347px;top:461px;">Удалить</div>
<div class="t" style="left:400px;top:461px;width:100px;text-align:right;">Del</div>
<div class="a" style="left:316px;top:481px;width:201px;height:1px;background:#e0e0e0"></div>
<div class="a" style="left:316px;top:482px;width:201px;height:1px;background:#fff"></div>
<svg class="a" style="left:318px;top:490px" width="18" height="16" viewBox="0 0 18 16"><defs><linearGradient id="rg1" x1="0" y1="0" x2="0" y2="1"><stop offset="0" stop-color="#8ee88e"/><stop offset="1" stop-color="#3cbf3c"/></linearGradient><linearGradient id="rg2" x1="0" y1="0" x2="1" y2="1"><stop offset="0" stop-color="#5ad05a"/><stop offset="1" stop-color="#0f800f"/></linearGradient></defs><path d="M13.8 6.2 C12.8 1.8 6.5 0.8 4.2 5.2" stroke="url(#rg1)" stroke-width="2.6" fill="none"/><path d="M1.2 2.2 L1.3 8.8 L7.8 8.4 Z" fill="#66d466"/><path d="M3.8 9.6 C5 14.2 11.5 14.8 13.6 10.4" stroke="url(#rg2)" stroke-width="2.6" fill="none"/><path d="M10 7.6 L16.6 7.4 L16.5 14 Z" fill="#139013"/></svg>
<div class="t" style="left:347px;top:492px;">Обновить</div>
<div class="t" style="left:400px;top:492px;width:100px;text-align:right;">F5</div>
<div class="a" style="left:316px;top:512px;width:201px;height:1px;background:#e0e0e0"></div>
<div class="a" style="left:316px;top:513px;width:201px;height:1px;background:#fff"></div>
<div class="t" style="left:347px;top:523px;">Состояние</div>
<div class="a" style="left:504px;top:524px;width:0;height:0;border-top:4.5px solid transparent;border-bottom:4.5px solid transparent;border-left:5px solid #3d80d8;overflow:visible"></div>
<div class="t" style="left:347px;top:548px;">Формирование</div>
<div class="a" style="left:504px;top:549px;width:0;height:0;border-top:4.5px solid transparent;border-bottom:4.5px solid transparent;border-left:5px solid #3d80d8;overflow:visible"></div>
<div class="a" style="left:316px;top:568px;width:201px;height:1px;background:#e0e0e0"></div>
<div class="a" style="left:316px;top:569px;width:201px;height:1px;background:#fff"></div>
<div class="a" style="left:316px;top:572px;width:201px;height:25px;border:1px solid #a9cbf3;border-radius:3px;background:linear-gradient(#f1f7fe,#d5e5fb)"></div>
<div class="t" style="left:347px;top:579px;">Просмотр</div>
<div class="a" style="left:504px;top:580px;width:0;height:0;border-top:4.5px solid transparent;border-bottom:4.5px solid transparent;border-left:5px solid #3d80d8;overflow:visible"></div>
<div class="a" style="left:316px;top:599px;width:201px;height:1px;background:#e0e0e0"></div>
<div class="a" style="left:316px;top:600px;width:201px;height:1px;background:#fff"></div>
<div class="t" style="left:347px;top:610px;">ЦИТК. Указать шифр затрат...</div>
<div class="a" style="left:316px;top:630px;width:201px;height:1px;background:#e0e0e0"></div>
<div class="a" style="left:316px;top:631px;width:201px;height:1px;background:#fff"></div>
<svg class="a" style="left:320px;top:638px" width="16" height="16" viewBox="0 0 16 16"><path d="M0.5 0.5 L7.5 0.5 L10.5 3.5 L10.5 15.5 L0.5 15.5Z" fill="#fbfbfb" stroke="#9a9a9a"/><circle cx="10" cy="10.5" r="3.6" fill="none" stroke="#6f6f6f" stroke-width="2" stroke-dasharray="1.5 1.3"/><circle cx="10" cy="10.5" r="2.4" fill="#e8e8e8" stroke="#777" stroke-width="0.9"/><circle cx="10" cy="10.5" r="0.9" fill="#fff"/></svg>
<div class="t" style="left:347px;top:641px;">Расширения</div>
<div class="a" style="left:504px;top:642px;width:0;height:0;border-top:4.5px solid transparent;border-bottom:4.5px solid transparent;border-left:5px solid #3d80d8;overflow:visible"></div>
<svg class="a" style="left:319px;top:663px" width="17" height="17" viewBox="0 0 17 17"><path d="M1.5 0.5 L10.5 0.5 L14.5 4.5 L14.5 15.5 L1.5 15.5Z" fill="#fbfbfb" stroke="#a8a8a8"/><rect x="3.8" y="9.6" width="6.4" height="5.4" rx="2.7" fill="none" stroke="#5d5d5d" stroke-width="1.5"/><rect x="8.8" y="9.6" width="6.4" height="5.4" rx="2.7" fill="none" stroke="#5d5d5d" stroke-width="1.5"/><path d="M6.5 12.3 H12.5" stroke="#333" stroke-width="1.3"/></svg>
<div class="t" style="left:347px;top:666px;">Связи</div>
<div class="a" style="left:504px;top:667px;width:0;height:0;border-top:4.5px solid transparent;border-bottom:4.5px solid transparent;border-left:5px solid #3d80d8;overflow:visible"></div>
<svg class="a" style="left:319px;top:689px" width="16" height="16" viewBox="0 0 16 16"><path d="M1.5 0.5 L6 0.5 L8 2.5 L8 12 L1.5 12Z" fill="#eef4fb" stroke="#4a6fb0"/><path d="M7.5 4.5 L12 4.5 L14.5 7 L14.5 15.5 L7.5 15.5Z" fill="#eef4fb" stroke="#4a6fb0"/><path d="M4 15 L4 9 L1 9 L5 5 L9 9 L6 9 L6 15Z" fill="#3ec43e" stroke="#1a8a1a" stroke-width="0.5"/><path d="M10 1 L10 6 L7.5 6 L11 10 L14.5 6 L12 6 L12 1Z" fill="#3ec43e" stroke="#1a8a1a" stroke-width="0.5"/></svg>
<div class="t" style="left:347px;top:691px;">Обмен</div>
<div class="a" style="left:504px;top:692px;width:0;height:0;border-top:4.5px solid transparent;border-bottom:4.5px solid transparent;border-left:5px solid #3d80d8;overflow:visible"></div>
<div class="a" style="left:316px;top:711px;width:201px;height:1px;background:#e0e0e0"></div>
<div class="a" style="left:316px;top:712px;width:201px;height:1px;background:#fff"></div>
<div class="ck" style="left:320px;top:721px"></div>
<div class="t" style="left:347px;top:722px;">Панель инструментов</div>
<div class="a" style="left:316px;top:742px;width:201px;height:1px;background:#e0e0e0"></div>
<div class="a" style="left:316px;top:743px;width:201px;height:1px;background:#fff"></div>
<svg class="a" style="left:318px;top:750px" width="17" height="17" viewBox="0 0 17 17"><path d="M2 13.5 L8.5 7" stroke="#3f7ad6" stroke-width="4.2" stroke-linecap="round"/><path d="M2 13.5 L8.5 7" stroke="#8db6f0" stroke-width="2" stroke-linecap="round"/><path d="M8 8.5 L10 6.5 C9 4 10.5 1 13.5 1.5 L12 3.5 L13.5 5 L15.5 3.5 C16 6.5 13 8 10.5 7" fill="#bdbdbd" stroke="#7a7a7a" stroke-width="0.9"/></svg>
<div class="t" style="left:347px;top:753px;">Настройки...</div>
<div class="t" style="left:400px;top:753px;width:100px;text-align:right;">Alt+Enter</div>
<div class="a" style="left:517px;top:572px;width:303px;height:156px;border:1px solid #9ebde6;background:#f0f0f0;box-shadow:2px 2px 5px rgba(0,0,0,0.22)"></div>
<div class="a" style="left:544px;top:573px;width:1px;height:154px;background:#e0e0e0"></div>
<div class="a" style="left:545px;top:573px;width:1px;height:154px;background:#fff"></div>
<div class="t" style="left:551px;top:582px;">Счета на оплату...</div>
<div class="t" style="left:551px;top:607px;">Входящие счета на оплату...</div>
<div class="t" style="left:551px;top:632px;">Расходные накладные на отпуск потребителям...</div>
<div class="t" style="left:551px;top:657px;">Приходные накладные...</div>
<div class="t" style="left:551px;top:682px;">Платежи...</div>
<div class="t" style="left:551px;top:707px;">Затраты...</div>
<svg class="a" style="left:540px;top:668px;overflow:visible" width="286" height="42" viewBox="0 0 286 42"><rect x="5.8" y="5.8" width="273" height="30" rx="7.5" fill="none" stroke="#ff0000" stroke-width="5.6"/></svg>
</body></html>
